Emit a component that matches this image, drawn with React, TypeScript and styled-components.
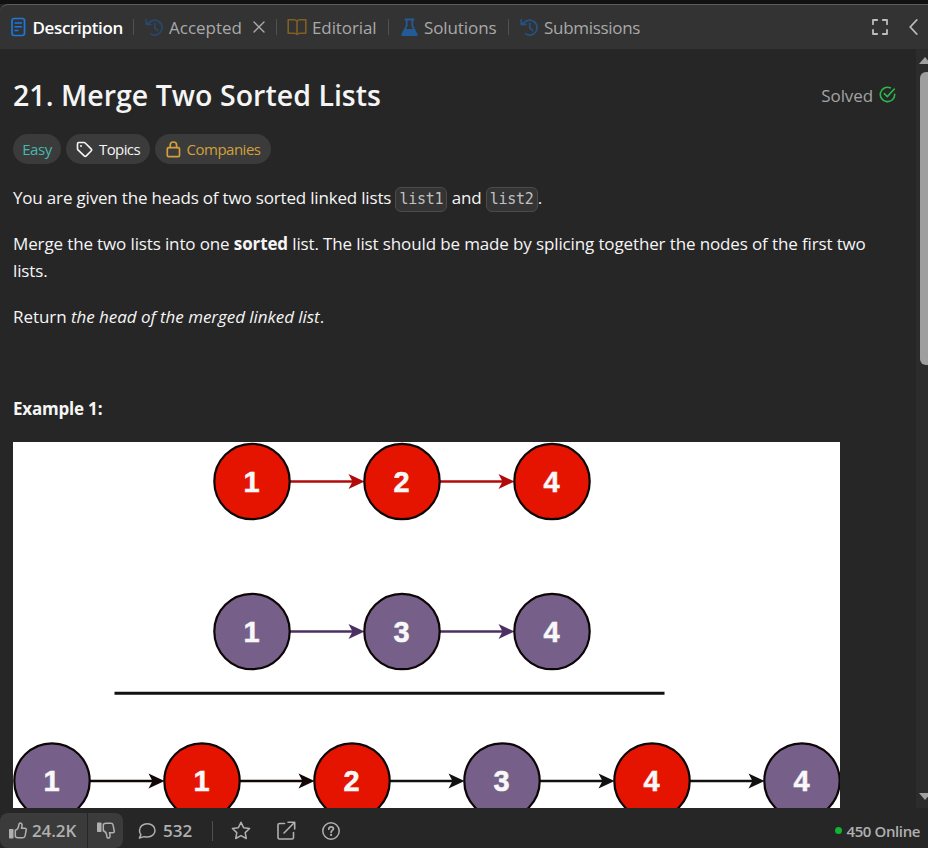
import React from "react";
import styled, { createGlobalStyle } from "styled-components";

const Global = createGlobalStyle`
  * { box-sizing: border-box; }
  body { margin: 0; background: #262626; overflow: hidden; }
  svg { display: block; flex: none; }
`;

const Page = styled.div`
  width: 928px;
  height: 848px;
  display: flex;
  flex-direction: column;
  overflow: hidden;
  background: #262626;
  color: #f5f5f5;
  font-family: "Open Sans", "Noto Sans", sans-serif;
  border-top: 4px solid #111111;
`;

const TabBar = styled.header`
  height: 45px;
  flex: none;
  display: flex;
  align-items: center;
  background: #333333;
  border-top: 1px solid #5c5c5c;
  border-top-left-radius: 8px;
  padding-left: 9px;
`;

const Tab = styled.div<{ $w: number; $active?: boolean; $gap?: number }>`
  width: ${(p) => p.$w}px;
  height: 24px;
  flex: none;
  display: flex;
  align-items: center;
  gap: ${(p) => p.$gap ?? 6}px;
  color: ${(p) => (p.$active ? "#ffffff" : "#a9a9a9")};
`;

const Label = styled.span<{ $size?: number; $ls?: number; $weight?: number }>`
  font-size: ${(p) => p.$size ?? 17}px;
  font-weight: ${(p) => p.$weight ?? 400};
  letter-spacing: ${(p) => p.$ls ?? 0}px;
  line-height: 24px;
  white-space: nowrap;
`;

const TabLabel = styled(Label)`
  padding-top: 1px;
`;

const CloseButton = styled.span`
  margin-left: 6px;
`;

const Divider = styled.i<{ $h?: number; $gap?: number }>`
  width: 1px;
  height: ${(p) => p.$h ?? 16}px;
  flex: none;
  margin-right: ${(p) => p.$gap ?? 10}px;
  background: #505050;
`;

const HeaderTools = styled.div`
  margin-left: auto;
  display: flex;
  align-items: center;
  gap: 21px;
  padding-right: 10px;
  color: #bdbdbd;
`;

const Body = styled.div`
  height: 759px;
  flex: none;
  display: flex;
`;

const Content = styled.main`
  flex: 1;
  min-width: 0;
  overflow: hidden;
  padding: 26px 20px 0 13px;
`;

const TitleRow = styled.div`
  height: 40px;
  display: flex;
  align-items: center;
  justify-content: space-between;
`;

const Title = styled.h1`
  margin: 0;
  font-size: 28.5px;
  line-height: 40px;
  font-weight: 600;
  letter-spacing: 0.03px;
  white-space: nowrap;
`;

const Solved = styled.div`
  display: flex;
  align-items: center;
  gap: 6px;
  padding-top: 2px;
  color: #a3a3a3;

  svg { margin-bottom: 4px; }
`;

const Pills = styled.div`
  display: flex;
  gap: 5px;
  margin-top: 19px;
`;

const Pill = styled.div<{ $w: number; $color: string }>`
  width: ${(p) => p.$w}px;
  height: 30px;
  border-radius: 15px;
  display: flex;
  align-items: center;
  justify-content: center;
  gap: 6px;
  background: #3b3b3b;
  color: ${(p) => p.$color};
`;

const Para = styled.p<{ $top: number; $ls?: number }>`
  margin: ${(p) => p.$top}px 0 0;
  font-size: 17px;
  line-height: 27px;
  letter-spacing: ${(p) => p.$ls ?? -0.13}px;
  white-space: nowrap;
`;

const Code = styled.code`
  display: inline-block;
  width: 52px;
  height: 25px;
  vertical-align: 0;
  border: 1px solid #4b4b4b;
  border-radius: 6px;
  background: #343434;
  color: #c0c0c0;
  font: 15px/23px "DejaVu Sans Mono", monospace;
  letter-spacing: -0.3px;
  text-align: center;
`;

const Intro = styled(Para)`
  height: 27px;
`;

const Figure = styled.div`
  width: 827px;
  height: 400px;
  margin-top: 20px;
  background: #ffffff;
`;

const ScrollTrack = styled.div`
  width: 12px;
  flex: none;
  overflow: hidden;
  background: #2c2c2c;
  display: flex;
  flex-direction: column;
  padding: 8px 0 8px 3px;
`;

const Thumb = styled.div`
  width: 14px;
  height: 293px;
  margin: 8px 0 auto 1px;
  border-radius: 6px;
  background: #9f9f9f;
`;

const Footer = styled.footer`
  height: 40px;
  flex: none;
  display: flex;
  align-items: center;
  padding: 5px 8px 0 0;
  color: #b0b0b0;
`;

const VoteGroup = styled.div`
  height: 35px;
  display: flex;
  gap: 1px;
  border-radius: 8px;
  overflow: hidden;
`;

const Vote = styled.div<{ $w: number }>`
  width: ${(p) => p.$w}px;
  display: flex;
  align-items: center;
  gap: 5px;
  padding-left: 9px;
  background: #3b3b3b;
`;

const Comments = styled.div`
  width: 74px;
  margin-left: 15px;
  display: flex;
  align-items: center;
  gap: 7px;
`;

const Actions = styled.div`
  display: flex;
  align-items: center;
  gap: 25px;
`;

const Online = styled.div`
  margin-left: auto;
  display: flex;
  align-items: center;
  gap: 5px;
`;

const Dot = styled.i`
  width: 7px;
  height: 7px;
  border-radius: 50%;
  background: #10b52f;
`;

const line = {
  fill: "none",
  stroke: "currentColor",
  strokeLinecap: "round" as const,
  strokeLinejoin: "round" as const,
};

const DocIcon = () => (
  <svg width="18" height="20" viewBox="0 0 18 20" {...line} stroke="#1b78df" strokeWidth="1.7">
    <rect x="3" y="1.5" width="12.5" height="17" rx="2.2" />
    <path d="M6 6h6.5M6 9.8h6.5M6 13.5h3" strokeWidth="1.4" />
  </svg>
);

const HistoryIcon = ({ color }: { color: string }) => (
  <svg width="19" height="19" viewBox="0 0 19 19" {...line} stroke={color} strokeWidth="1.7">
    <path d="M6.500 2.900A7.400 7.400 0 1 1 5.700 15.900" />
    <path d="M9.800 5.300v4.500l2.800 2.700" />
    <path d="M1.200 1.800v4.600h4.600M1.500 6.200l5-3.300" />
  </svg>
);

const BookIcon = () => (
  <svg width="20" height="18" viewBox="0 0 20 18" {...line} stroke="#806020" strokeWidth="1.6">
    <path d="M10 3.5C9.3 2 8.3 1.8 7 1.8H1.2v13.4h6c1.3 0 2.1.3 2.8 1.2.7-.9 1.5-1.2 2.8-1.2h6V1.8H13c-1.3 0-2.3.2-3 1.7zM10 3.5v12.5" />
  </svg>
);

const FlaskIcon = () => (
  <svg width="17" height="19" viewBox="0 0 17 19">
    <path d="M3.7.5h9.6v2h-1.1v5.1l4.3 8.3c.6 1.2-.1 2.1-1.3 2.1H1.8c-1.2 0-1.9-.9-1.3-2.1l4.3-8.3V2.5H3.7z" fill="#225b96" />
    <path d="M6.6 2.5h3.8v5.6l1.5 3H5.1l1.5-3z" fill="#333" />
  </svg>
);

const CloseIcon = () => (
  <svg width="12" height="12" viewBox="0 0 12 12" {...line} strokeWidth="1.4">
    <path d="M1 1l10 10M11 1L1 11" />
  </svg>
);

const ExpandIcon = () => (
  <svg width="16" height="16" viewBox="0 0 16 16" {...line} strokeWidth="1.8">
    <path d="M1 5.2V1h4.2M10.8 1H15v4.2M15 10.8V15h-4.2M5.2 15H1v-4.2" />
  </svg>
);

const ChevronIcon = () => (
  <svg width="9" height="16" viewBox="0 0 9 16" {...line} strokeWidth="1.8">
    <path d="M7.7 1L1.2 8l6.5 7" />
  </svg>
);

const CheckIcon = () => (
  <svg width="17" height="17" viewBox="0 0 17 17" {...line} stroke="#2cb84c" strokeWidth="1.6">
    <path d="M11.3 1.8A7.2 7.2 0 1 0 15.7 8.2" />
    <path d="M5.3 7.7l3 2.9 7-7.6" />
  </svg>
);

const TagIcon = () => (
  <svg width="17" height="17" viewBox="0 0 17 17" {...line} strokeWidth="1.6">
    <path d="M1.5 2.7c0-.8.4-1.2 1.2-1.2H8c.5 0 .9.2 1.2.5l5.9 5.9c.7.7.7 1.4 0 2.1l-4.8 4.9c-.7.7-1.4.7-2.1 0L2 8.9c-.3-.3-.5-.7-.5-1.2z" />
    <circle cx="5" cy="5" r="1" fill="currentColor" stroke="none" />
  </svg>
);

const LockIcon = () => (
  <svg width="15" height="17" viewBox="0 0 15 17" {...line} strokeWidth="1.7">
    <rect x="1.3" y="6.7" width="12.2" height="9" rx="1.3" />
    <path d="M4.2 6.5V4.2a3.2 3.2 0 0 1 6.4 0v2.3" />
  </svg>
);

const ThumbIcon = ({ down }: { down?: boolean }) => (
  <svg width="18" height="17" viewBox="0 0 18 17" {...line} strokeWidth="1.5">
    <g transform={down ? "translate(0 17) scale(1 -1)" : undefined}>
      <rect x="0" y="7" width="4.5" height="9.5" rx=".7" fill="currentColor" stroke="none" />
      <path d="M6.3 8.3c2.2-.8 3.3-2.6 3.5-5.2.1-1.5.7-2.2 1.5-2.2 1.7 0 2.3 1.9 1.2 5.4h3.3c1.1 0 1.6.7 1.4 1.7l-1.1 5.8c-.3 1.3-1 1.9-2.2 1.9H9.3c-1.3 0-2.1-.3-3-1.1z" />
    </g>
  </svg>
);

const BubbleIcon = () => (
  <svg width="18" height="18" viewBox="0 0 18 18" {...line} strokeWidth="1.5">
    <path d="M9.3 1.7c4.4 0 7.7 2.9 7.7 6.7s-3.3 6.7-7.7 6.7c-1.1 0-2.1-.2-3.1-.5L1.4 16l1.5-3.4C1.9 11.4 1.5 10 1.5 8.4c0-3.8 3.4-6.7 7.8-6.7z" />
  </svg>
);

const StarIcon = () => (
  <svg width="20" height="19" viewBox="0 0 20 19" {...line} strokeWidth="1.5">
    <path d="M10 1.3l2.6 5.4 6 .8-4.4 4.1 1.1 5.9L10 14.6l-5.3 2.9 1.1-5.9L1.4 7.5l6-.8z" />
  </svg>
);

const ShareIcon = () => (
  <svg width="20" height="20" viewBox="0 0 20 20" {...line} strokeWidth="1.6">
    <path d="M8.5 2.500h-5c-1 0-1.500.5-1.500 1.500v12.500c0 1 .5 1.500 1.500 1.500H16c1 0 1.500-.5 1.500-1.500v-5M12 1.300h6.700V8M18.200 1.800L8 12" />
  </svg>
);

const HelpIcon = () => (
  <svg width="20" height="20" viewBox="0 0 20 20" {...line} strokeWidth="1.5">
    <circle cx="10" cy="10" r="8.2" />
    <path d="M7.8 8.2c.1-1.6 1-2.4 2.3-2.4 1.4 0 2.3.8 2.3 2 0 1.6-2.3 1.7-2.3 3.5" strokeWidth="1.7" />
    <circle cx="10.1" cy="13.9" r="1.1" fill="currentColor" stroke="none" />
  </svg>
);

const RED = "#e51400";
const PURPLE = "#76608a";

const Row = ({ x, y, nodes, edges }: { x: number; y: number; nodes: [number, string][]; edges: string[] }) => (
  <g>
    {edges.map((c, i) => {
      const sx = x + i * 150 + 38;
      return (
        <g key={i}>
          <path d={`M${sx} ${y}H${sx + 66}`} stroke={c} strokeWidth="2.6" />
          <path d={`M${sx + 74.5} ${y}l-16 -7.5 4 7.5 -4 7.5z`} fill={c} />
        </g>
      );
    })}
    {nodes.map(([n, c], i) => (
      <g key={i}>
        <circle cx={x + i * 150} cy={y} r="37.7" fill={c} stroke="#0c0606" strokeWidth="2.2" />
        <text
          x={x + i * 150 - 0.5}
          y={y + 10}
          textAnchor="middle"
          fill="#f8f8f8"
          stroke="#f8f8f8"
          strokeWidth="0.5"
          fontFamily="Liberation Sans, Arial, sans-serif"
          fontWeight="700"
          fontSize="29"
        >
          {n}
        </text>
      </g>
    ))}
  </g>
);

const MergeDiagram = () => (
  <svg width="827" height="400" viewBox="0 0 827 400">
    <Row x={239} y={39.5} nodes={[[1, RED], [2, RED], [4, RED]]} edges={["#b20a0a", "#b20a0a"]} />
    <Row x={239} y={189.5} nodes={[[1, PURPLE], [3, PURPLE], [4, PURPLE]]} edges={["#4b3062", "#4b3062"]} />
    <path d="M101.5 251.3H651.5" stroke="#111" strokeWidth="3" />
    <Row
      x={39}
      y={339}
      nodes={[[1, PURPLE], [1, RED], [2, RED], [3, PURPLE], [4, RED], [4, PURPLE]]}
      edges={["#120606", "#120606", "#111", "#111", "#111"]}
    />
  </svg>
);

export default function App() {
  return (
    <>
      <Global />
      <Page>
        <TabBar>
          <Tab $w={124} $active $gap={5.5}>
            <DocIcon />
            <TabLabel $weight={600} $ls={-0.35}>Description</TabLabel>
          </Tab>
          <Divider $gap={11} />
          <Tab $w={131} $gap={5}>
            <HistoryIcon color="#27496f" />
            <TabLabel>Accepted</TabLabel>
            <CloseButton>
              <CloseIcon />
            </CloseButton>
          </Tab>
          <Divider />
          <Tab $w={101} $gap={5}>
            <BookIcon />
            <TabLabel $ls={-0.1}>Editorial</TabLabel>
          </Tab>
          <Divider $gap={12} />
          <Tab $w={107}>
            <FlaskIcon />
            <TabLabel $ls={-0.1}>Solutions</TabLabel>
          </Tab>
          <Divider $gap={11} />
          <Tab $w={140} $gap={5}>
            <HistoryIcon color="#235487" />
            <TabLabel $ls={-0.3}>Submissions</TabLabel>
          </Tab>
          <HeaderTools>
            <ExpandIcon />
            <ChevronIcon />
          </HeaderTools>
        </TabBar>

        <Body>
          <Content>
            <TitleRow>
              <Title>21. Merge Two Sorted Lists</Title>
              <Solved>
                <Label $ls={-0.1}>Solved</Label>
                <CheckIcon />
              </Solved>
            </TitleRow>
            <Pills>
              <Pill $w={48} $color="#46b9ac">
                <Label $size={15} $ls={-0.4}>Easy</Label>
              </Pill>
              <Pill $w={84} $color="#f5f5f5">
                <TagIcon />
                <Label $size={15} $ls={-0.6}>Topics</Label>
              </Pill>
              <Pill $w={116} $color="#d2a03c">
                <LockIcon />
                <Label $size={15} $ls={-0.5}>Companies</Label>
              </Pill>
            </Pills>

            <Intro $top={20} $ls={-0.18}>
              You are given the heads of two sorted linked lists <Code>list1</Code> and <Code>list2</Code>.
            </Intro>
            <Para $top={19}>
              Merge the two lists into one <b>sorted</b> list. The list should be made by splicing together the nodes of the first two
              <br />
              lists.
            </Para>
            <Para $top={19} $ls={-0.05}>
              Return <em>the head of the merged linked list</em>.
            </Para>
            <Para $top={65} $ls={-0.2}>
              <b>Example 1:</b>
            </Para>
            <Figure>
              <MergeDiagram />
            </Figure>
          </Content>
          <ScrollTrack>
            <svg width="12" height="7" viewBox="0 0 12 7">
              <path d="M0 7L6 0l6 7z" fill="#a0a0a0" />
            </svg>
            <Thumb />
            <svg width="12" height="7" viewBox="0 0 12 7">
              <path d="M0 0h12L6 7z" fill="#a0a0a0" />
            </svg>
          </ScrollTrack>
        </Body>

        <Footer>
          <VoteGroup>
            <Vote $w={87}>
              <ThumbIcon />
              <Label $weight={600} $ls={-0.1}>24.2K</Label>
            </Vote>
            <Vote $w={35}>
              <ThumbIcon down />
            </Vote>
          </VoteGroup>
          <Comments>
            <BubbleIcon />
            <Label $weight={600}>532</Label>
          </Comments>
          <Divider $h={20} $gap={18} />
          <Actions>
            <StarIcon />
            <ShareIcon />
            <HelpIcon />
          </Actions>
          <Online>
            <Dot />
            <Label $size={15} $weight={600} $ls={-0.4}>450 Online</Label>
          </Online>
        </Footer>
      </Page>
    </>
  );
}
